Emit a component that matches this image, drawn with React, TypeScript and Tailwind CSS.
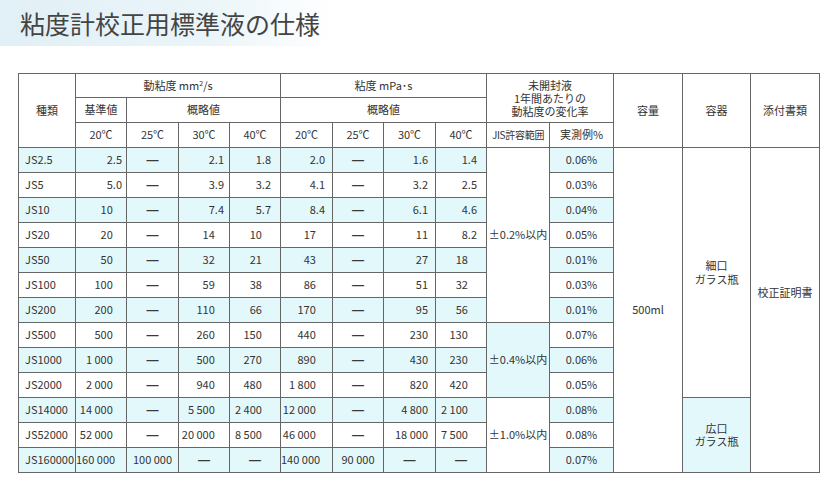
import React from "react";

// One standard fluid per row: name, kinematic (20/25/30/40℃), viscosity (20/25/30/40℃), measured change.
type Row = {
  name: string;
  kin: string[];
  dyn: string[];
  measured: string;
};

const DASH = "—";

const rows: Row[] = [
  { name: "JS2.5", kin: ["2.5", DASH, "2.1", "1.8"], dyn: ["2.0", DASH, "1.6", "1.4"], measured: "0.06%" },
  { name: "JS5", kin: ["5.0", DASH, "3.9", "3.2"], dyn: ["4.1", DASH, "3.2", "2.5"], measured: "0.03%" },
  { name: "JS10", kin: ["10", DASH, "7.4", "5.7"], dyn: ["8.4", DASH, "6.1", "4.6"], measured: "0.04%" },
  { name: "JS20", kin: ["20", DASH, "14", "10"], dyn: ["17", DASH, "11", "8.2"], measured: "0.05%" },
  { name: "JS50", kin: ["50", DASH, "32", "21"], dyn: ["43", DASH, "27", "18"], measured: "0.01%" },
  { name: "JS100", kin: ["100", DASH, "59", "38"], dyn: ["86", DASH, "51", "32"], measured: "0.03%" },
  { name: "JS200", kin: ["200", DASH, "110", "66"], dyn: ["170", DASH, "95", "56"], measured: "0.01%" },
  { name: "JS500", kin: ["500", DASH, "260", "150"], dyn: ["440", DASH, "230", "130"], measured: "0.07%" },
  { name: "JS1000", kin: ["1 000", DASH, "500", "270"], dyn: ["890", DASH, "430", "230"], measured: "0.06%" },
  { name: "JS2000", kin: ["2 000", DASH, "940", "480"], dyn: ["1 800", DASH, "820", "420"], measured: "0.05%" },
  { name: "JS14000", kin: ["14 000", DASH, "5 500", "2 400"], dyn: ["12 000", DASH, "4 800", "2 100"], measured: "0.08%" },
  { name: "JS52000", kin: ["52 000", DASH, "20 000", "8 500"], dyn: ["46 000", DASH, "18 000", "7 500"], measured: "0.08%" },
  { name: "JS160000", kin: ["160 000", "100 000", DASH, DASH], dyn: ["140 000", "90 000", DASH, DASH], measured: "0.07%" },
];

// Per numeric column: "dec" lines integers up with the decimal point, "center", or plain right.
type Align = { mode: "dec" | "center" | "right"; pad: string };
const numAlign: Align[] = [
  { mode: "dec", pad: "pr-[4px]" },
  { mode: "center", pad: "" },
  { mode: "dec", pad: "pr-[5px]" },
  { mode: "dec", pad: "pr-[9px]" },
  { mode: "dec", pad: "pr-[7px]" },
  { mode: "center", pad: "" },
  { mode: "right", pad: "pr-[7px]" },
  { mode: "dec", pad: "pr-[9px]" },
];

const colWidths = [
  "w-[57px]", "w-[51px]", "w-[52px]", "w-[51px]", "w-[51px]", "w-[52px]", "w-[51px]",
  "w-[52px]", "w-[51px]", "w-[63px]", "w-[64px]", "w-[69px]", "w-[68px]", "w-[69px]",
];

const cell = "border border-[#666] p-0 font-normal";
const cyan = "bg-[#e3f8fb]";

function NumCell({ value, align, shaded }: { value: string; align: Align; shaded: boolean }) {
  const bg = shaded ? cyan : "bg-white";
  if (value === DASH) {
    // The dash in the print is a short, heavy bar.
    return (
      <td className={`${cell} ${bg} text-center`}>
        <span className="text-[12px] font-bold text-[#3a3a3a]" style={{ fontFamily: '"Liberation Sans", sans-serif' }}>
          {DASH}
        </span>
      </td>
    );
  }
  if (align.mode === "center") {
    return <td className={`${cell} ${bg} text-center`}>{value}</td>;
  }
  const isInt = !value.includes(".");
  return (
    <td className={`${cell} ${bg} text-right whitespace-nowrap ${align.pad}`}>
      {value}
      {align.mode === "dec" && isInt && <span className="invisible">.0</span>}
    </td>
  );
}

export default function App() {
  return (
    <div
      className="w-[831px] h-[504px] bg-white text-[#333]"
      style={{ fontFamily: '"Noto Sans CJK JP", "Noto Sans", sans-serif' }}
    >
      {/* Title band */}
      <div className="h-[46px] flex items-center pl-[20px] bg-linear-to-r from-[#e1f0f6] via-[#eaf5f9] via-25% to-white to-40%">
        <h1 className="text-[25px] leading-none text-[#444] font-normal">粘度計校正用標準液の仕様</h1>
      </div>

      <div className="mt-[27px] ml-[18px]">
        <table className="table-fixed border-collapse w-[801px] text-[11px] leading-[13.5px] border border-[#555]">
          <colgroup>
            {colWidths.map((w, i) => (
              <col key={i} className={w} />
            ))}
          </colgroup>
          <thead>
            <tr className="h-[24px]">
              <th rowSpan={3} className={cell}>種類</th>
              <th colSpan={4} className={cell}>
                動粘度 mm<sup className="text-[7px]">2</sup>/s
              </th>
              <th colSpan={4} className={cell}>粘度 mPa･s</th>
              <th colSpan={2} rowSpan={2} className={`${cell} leading-[13px]`}>
                未開封液
                <br />
                1年間あたりの
                <br />
                動粘度の変化率
              </th>
              <th rowSpan={3} className={cell}>容量</th>
              <th rowSpan={3} className={cell}>容器</th>
              <th rowSpan={3} className={cell}>添付書類</th>
            </tr>
            <tr className="h-[25px]">
              <th className={cell}>基準値</th>
              <th colSpan={3} className={cell}>概略値</th>
              <th colSpan={4} className={cell}>概略値</th>
            </tr>
            <tr className="h-[25px]">
              {["20℃", "25℃", "30℃", "40℃", "20℃", "25℃", "30℃", "40℃"].map((t, i) => (
                <th key={i} className={cell}>{t}</th>
              ))}
              <th className={`${cell} text-[10px] tracking-[-0.3px]`}>JIS許容範囲</th>
              <th className={cell}>実測例%</th>
            </tr>
          </thead>
          <tbody>
            {rows.map((r, i) => {
              const shaded = i % 2 === 0;
              const bg = shaded ? cyan : "bg-white";
              const nums = [...r.kin, ...r.dyn];
              return (
                <tr key={r.name} className="h-[25px]">
                  <td className={`${cell} ${bg} text-left pl-[6px] whitespace-nowrap`}>{r.name}</td>
                  {nums.map((v, j) => (
                    <NumCell key={j} value={v} align={numAlign[j]} shaded={shaded} />
                  ))}
                  {i === 0 && (
                    <td rowSpan={7} className={`${cell} bg-white text-center`}>±0.2%以内</td>
                  )}
                  {i === 7 && (
                    <td rowSpan={3} className={`${cell} ${cyan} text-center`}>±0.4%以内</td>
                  )}
                  {i === 10 && (
                    <td rowSpan={3} className={`${cell} bg-white text-center`}>±1.0%以内</td>
                  )}
                  <td className={`${cell} ${bg} text-center`}>{r.measured}</td>
                  {i === 0 && (
                    <td rowSpan={13} className={`${cell} bg-white text-center`}>500ml</td>
                  )}
                  {i === 0 && (
                    <td rowSpan={10} className={`${cell} bg-white text-center`}>
                      細口
                      <br />
                      ガラス瓶
                    </td>
                  )}
                  {i === 10 && (
                    <td rowSpan={3} className={`${cell} ${cyan} text-center`}>
                      広口
                      <br />
                      ガラス瓶
                    </td>
                  )}
                  {i === 0 && (
                    <td rowSpan={13} className={`${cell} bg-white text-center pb-[34px]`}>校正証明書</td>
                  )}
                </tr>
              );
            })}
          </tbody>
        </table>
      </div>
    </div>
  );
}
